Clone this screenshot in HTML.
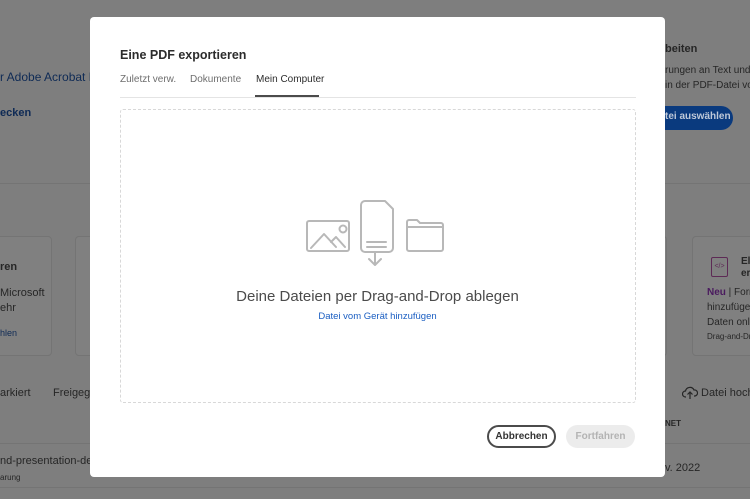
<!DOCTYPE html>
<html><head><meta charset="utf-8"><style>
*{margin:0;padding:0;box-sizing:border-box}
body{width:750px;height:499px;overflow:hidden;position:relative;background:#7e7e7e;font-family:"Liberation Sans",sans-serif;color:#262626}
.a{position:absolute;white-space:nowrap}
.card{position:absolute;border:1px solid #747474;border-radius:4px;background:#808080}
.modal{position:absolute;left:90px;top:17px;width:575px;height:460px;background:#fff;border-radius:4px}
</style></head><body>
<div class="a" style="left:0;top:183px;width:750px;height:1px;background:#747474"></div>
<div class="a" style="left:0;top:443px;width:750px;height:1px;background:#747474"></div>
<div class="a" style="left:0;top:487px;width:750px;height:1px;background:#747474"></div>
<div class="a" style="left:0;top:70px;font-size:12px;color:#0e2a55">r Adobe Acrobat Pr</div>
<div class="a" style="left:0;top:107px;font-size:11px;font-weight:bold;color:#0e2a55">ecken</div>
<div class="card" style="left:-5px;top:236px;width:57px;height:120px"></div>
<div class="card" style="left:75px;top:236px;width:30px;height:120px"></div>
<div class="a" style="left:0;top:261px;font-size:11px;font-weight:bold">ren</div>
<div class="a" style="left:0;top:287px;font-size:11px">Microsoft</div>
<div class="a" style="left:0;top:302px;font-size:11px">ehr</div>
<div class="a" style="left:0;top:328px;font-size:9px;color:#0e2a55">hlen</div>
<div class="a" style="left:0;top:387px;font-size:11px">arkiert</div>
<div class="a" style="left:53px;top:387px;font-size:11px">Freigeg.</div>
<div class="a" style="left:0;top:455px;font-size:11px">nd-presentation-de</div>
<div class="a" style="left:0;top:473px;font-size:8px">arung</div>
<div class="a" style="left:665px;top:43px;font-size:11px;font-weight:bold">beiten</div>
<div class="a" style="left:665px;top:65px;font-size:10px">rungen an Text und B</div>
<div class="a" style="left:665px;top:80px;font-size:10px">in der PDF-Datei vo</div>
<div class="a" style="left:640px;top:106px;width:93px;height:24px;background:#0a3a7e;border-radius:12px"></div>
<div class="a" style="left:665px;top:111px;font-size:10px;font-weight:bold;color:#bfc9d9">tei auswählen</div>
<div class="card" style="left:692px;top:236px;width:70px;height:120px"></div>
<div class="card" style="left:660px;top:236px;width:7px;height:120px"></div>
<div class="a" style="left:711px;top:257px;width:17px;height:20px;border:1px solid #5d2a55;border-radius:2px;font-size:7px;color:#5d2a55;text-align:center;line-height:18px">&lt;/&gt;</div>
<div class="a" style="left:741px;top:256px;font-size:10px;font-weight:bold">El</div>
<div class="a" style="left:741px;top:268px;font-size:10px;font-weight:bold">er</div>
<div class="a" style="left:707px;top:287px;font-size:10px"><b style="color:#4a1a5e">Neu</b> | Form</div>
<div class="a" style="left:707px;top:302px;font-size:10px">hinzufügen</div>
<div class="a" style="left:707px;top:317px;font-size:10px">Daten onli</div>
<div class="a" style="left:707px;top:332px;font-size:8px">Drag-and-Dr</div>
<svg class="a" style="left:682px;top:386px" width="16" height="14" viewBox="0 0 16 14" fill="none" stroke="#262626" stroke-width="1.2"><path d="M4 11H3.5a3 3 0 010-6 4.5 4.5 0 018.5-1 3 3 0 011 6H12M8 13V6M5.5 8.5L8 6l2.5 2.5"/></svg>
<div class="a" style="left:701px;top:387px;font-size:11px">Datei hochla</div>
<div class="a" style="left:665px;top:419px;font-size:8px;font-weight:bold">NET</div>
<div class="a" style="left:665px;top:462px;font-size:11px">v. 2022</div>

<div class="modal">
<div class="a" style="left:30px;top:31px;font-size:12.5px;font-weight:bold;color:#2c2c2c">Eine PDF exportieren</div>
<div class="a" style="left:30px;top:57px;font-size:10px;color:#6e6e6e">Zuletzt verw.</div>
<div class="a" style="left:100px;top:57px;font-size:10px;color:#6e6e6e">Dokumente</div>
<div class="a" style="left:166px;top:57px;font-size:10px;color:#2c2c2c">Mein Computer</div>
<div class="a" style="left:30px;top:80px;width:516px;height:1px;background:#e4e4e4"></div>
<div class="a" style="left:165px;top:78px;width:64px;height:2px;background:#4b4b4b"></div>
<div class="a" style="left:30px;top:92px;width:516px;height:294px;border:1.5px dashed #d8d8d8;border-radius:3px"></div>
<svg class="a" style="left:215px;top:182px" width="145" height="70" viewBox="0 0 145 70" fill="none" stroke="#b8b8b8" stroke-width="2" stroke-linejoin="round" stroke-linecap="round">
<rect x="2" y="22" width="42" height="30" rx="2"/>
<circle cx="38" cy="30" r="3.5"/>
<path d="M6 49l13-14 12 13M26 43l5-5 9 10"/>
<path d="M60 2h20l8 8v39a4 4 0 01-4 4H60a4 4 0 01-4-4V6a4 4 0 014-4z"/>
<path d="M62 43h19M62 48h19M70 53v13M64 60l6 6 6-6"/>
<path d="M104 21h8l3 3h21a2 2 0 012 2v24a2 2 0 01-2 2h-32a2 2 0 01-2-2V23a2 2 0 012-2zM102 28h36"/>
</svg>
<div class="a" style="left:0;width:575px;text-align:center;top:271px;font-size:15px;color:#4b4b4b">Deine Dateien per Drag-and-Drop ablegen</div>
<div class="a" style="left:0;width:575px;text-align:center;top:294px;font-size:9.5px;color:#1a5ec2">Datei vom Gerät hinzufügen</div>
<div class="a" style="left:397px;top:408px;width:69px;height:23px;border:2px solid #4b4b4b;border-radius:12px;font-size:10px;font-weight:bold;color:#333;text-align:center;line-height:19px">Abbrechen</div>
<div class="a" style="left:476px;top:408px;width:69px;height:23px;background:#ececec;border-radius:12px;font-size:10px;font-weight:bold;color:#b3b3b3;text-align:center;line-height:23px">Fortfahren</div>
</div>
</body></html>
